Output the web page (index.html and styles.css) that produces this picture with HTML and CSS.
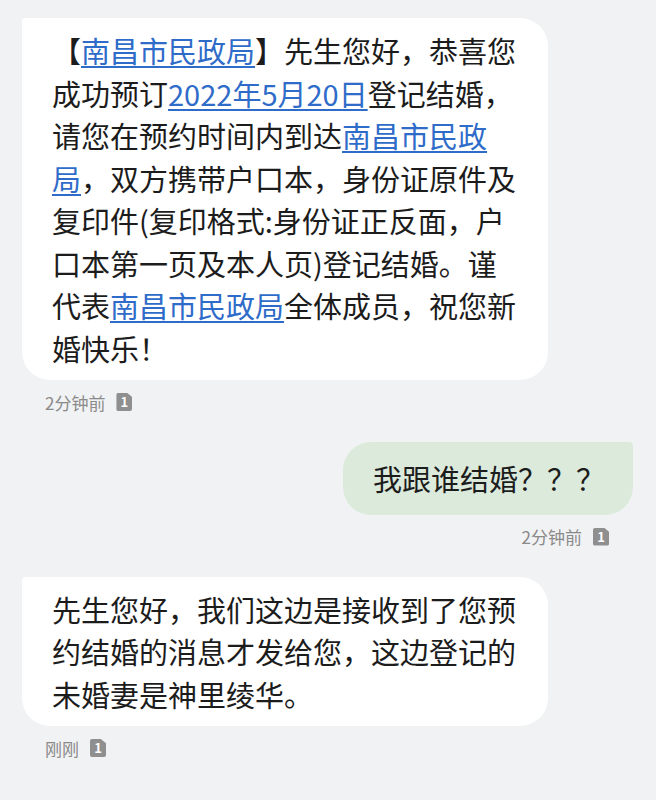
FILE: index.html
```html
<!DOCTYPE html>
<html lang="zh-CN">
<head>
  <meta charset="UTF-8" />
  <meta name="viewport" content="width=device-width" />
  <title>短信</title>
  <link rel="stylesheet" href="styles.css">
</head>
<body>
  <div class="thread">
    <div class="msg received">
      <div class="bubble">【<a href="#">南昌市民政局</a>】先生您好，恭喜您成功预订<a href="#">2022年5月20日</a>登记结婚，请您在预约时间内到达<a href="#">南昌市民政局</a>，双方携带户口本，身份证原件及复印件(复印格式:身份证正反面，户口本第一页及本人页)登记结婚。谨代表<a href="#">南昌市民政局</a>全体成员，祝您新婚快乐！</div>
      <div class="meta"><span>2分钟前</span><span class="sim">1</span></div>
    </div>

    <div class="msg sent">
      <div class="bubble">我跟谁结婚？？？</div>
      <div class="meta"><span>2分钟前</span><span class="sim">1</span></div>
    </div>

    <div class="msg received">
      <div class="bubble">先生您好，我们这边是接收到了您预约结婚的消息才发给您，这边登记的未婚妻是神里绫华。</div>
      <div class="meta"><span>刚刚</span><span class="sim">1</span></div>
    </div>
  </div>
</body>
</html>
```

FILE: styles.css
```css
body {
  margin: 0;
  background: #f1f2f4;
  font-family: "Noto Sans CJK SC", "Noto Sans", sans-serif;
  color: #1c1c1c;
}
.thread {
  padding: 18px 23px 18px 22px;
  display: flex;
  flex-direction: column;
  gap: 28px;
}
.msg {
  display: flex;
  flex-direction: column;
}
.received {
  align-items: flex-start;
}
.sent {
  align-items: flex-end;
}
.bubble {
  box-sizing: border-box;
  max-width: 526px;
  padding: 11px 30px;
  font-size: 29px;
  line-height: 42.5px;
  background: #fff;
  border-radius: 4px 28px 28px 28px;
}
.sent .bubble {
  background: #dbeadb;
  border-radius: 28px 4px 28px 28px;
  padding: 15px 28px 15px 30px;
}
.bubble a {
  color: #2f6cc9;
  text-decoration: underline;
  text-underline-offset: 3px;
}
.meta {
  display: flex;
  align-items: center;
  gap: 11px;
  margin-top: 10px;
  height: 24px;
  padding: 0 23px;
  font-size: 17px;
  color: #8a8a8a;
}
.sent .meta {
  padding: 0 24px;
}
.sim {
  width: 16px;
  height: 18px;
  border-radius: 2px;
  background: #8f8f8f;
  color: #fff;
  font-size: 13px;
  font-weight: bold;
  line-height: 18px;
  text-align: center;
  clip-path: polygon(0 0, 68% 0, 100% 24%, 100% 100%, 0 100%);
}
```
